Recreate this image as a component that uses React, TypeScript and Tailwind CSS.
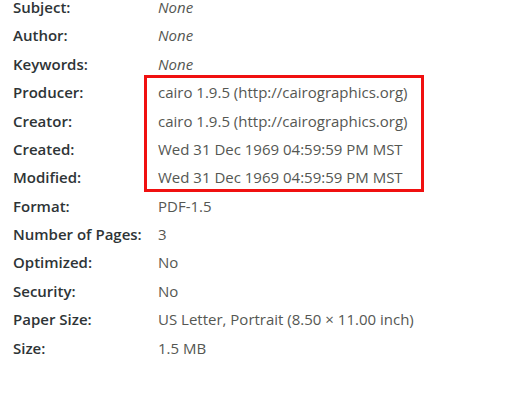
import React from "react";

const rows: { label: string; value: string; italic?: boolean }[] = [
  { label: "Subject:", value: "None", italic: true },
  { label: "Author:", value: "None", italic: true },
  { label: "Keywords:", value: "None", italic: true },
  { label: "Producer:", value: "cairo 1.9.5 (http://cairographics.org)" },
  { label: "Creator:", value: "cairo 1.9.5 (http://cairographics.org)" },
  { label: "Created:", value: "Wed 31 Dec 1969 04:59:59 PM MST" },
  { label: "Modified:", value: "Wed 31 Dec 1969 04:59:59 PM MST" },
  { label: "Format:", value: "PDF-1.5" },
  { label: "Number of Pages:", value: "3" },
  { label: "Optimized:", value: "No" },
  { label: "Security:", value: "No" },
  { label: "Paper Size:", value: "US Letter, Portrait (8.50 × 11.00 inch)" },
  { label: "Size:", value: "1.5 MB" },
];

export default function App() {
  return (
    <div
      className="w-[526px] h-[394px] bg-white overflow-hidden relative"
      style={{ fontFamily: '"Open Sans", "Noto Sans", sans-serif' }}
    >
      <div className="mt-[-7px] ml-[13px] grid grid-cols-[145px_1fr] auto-rows-[28.4px] text-[15px]">
        {rows.map((r) => (
          <React.Fragment key={r.label}>
            <div className="flex items-center font-semibold text-[#2e3436] whitespace-nowrap">{r.label}</div>
            <div className={"flex items-center text-[#555753] whitespace-nowrap " + (r.italic ? "italic" : "")}>{r.value}</div>
          </React.Fragment>
        ))}
      </div>
      <div className="absolute left-[144px] top-[75px] w-[280px] h-[117px] border-[3px] border-[#f01010]" />
    </div>
  );
}
